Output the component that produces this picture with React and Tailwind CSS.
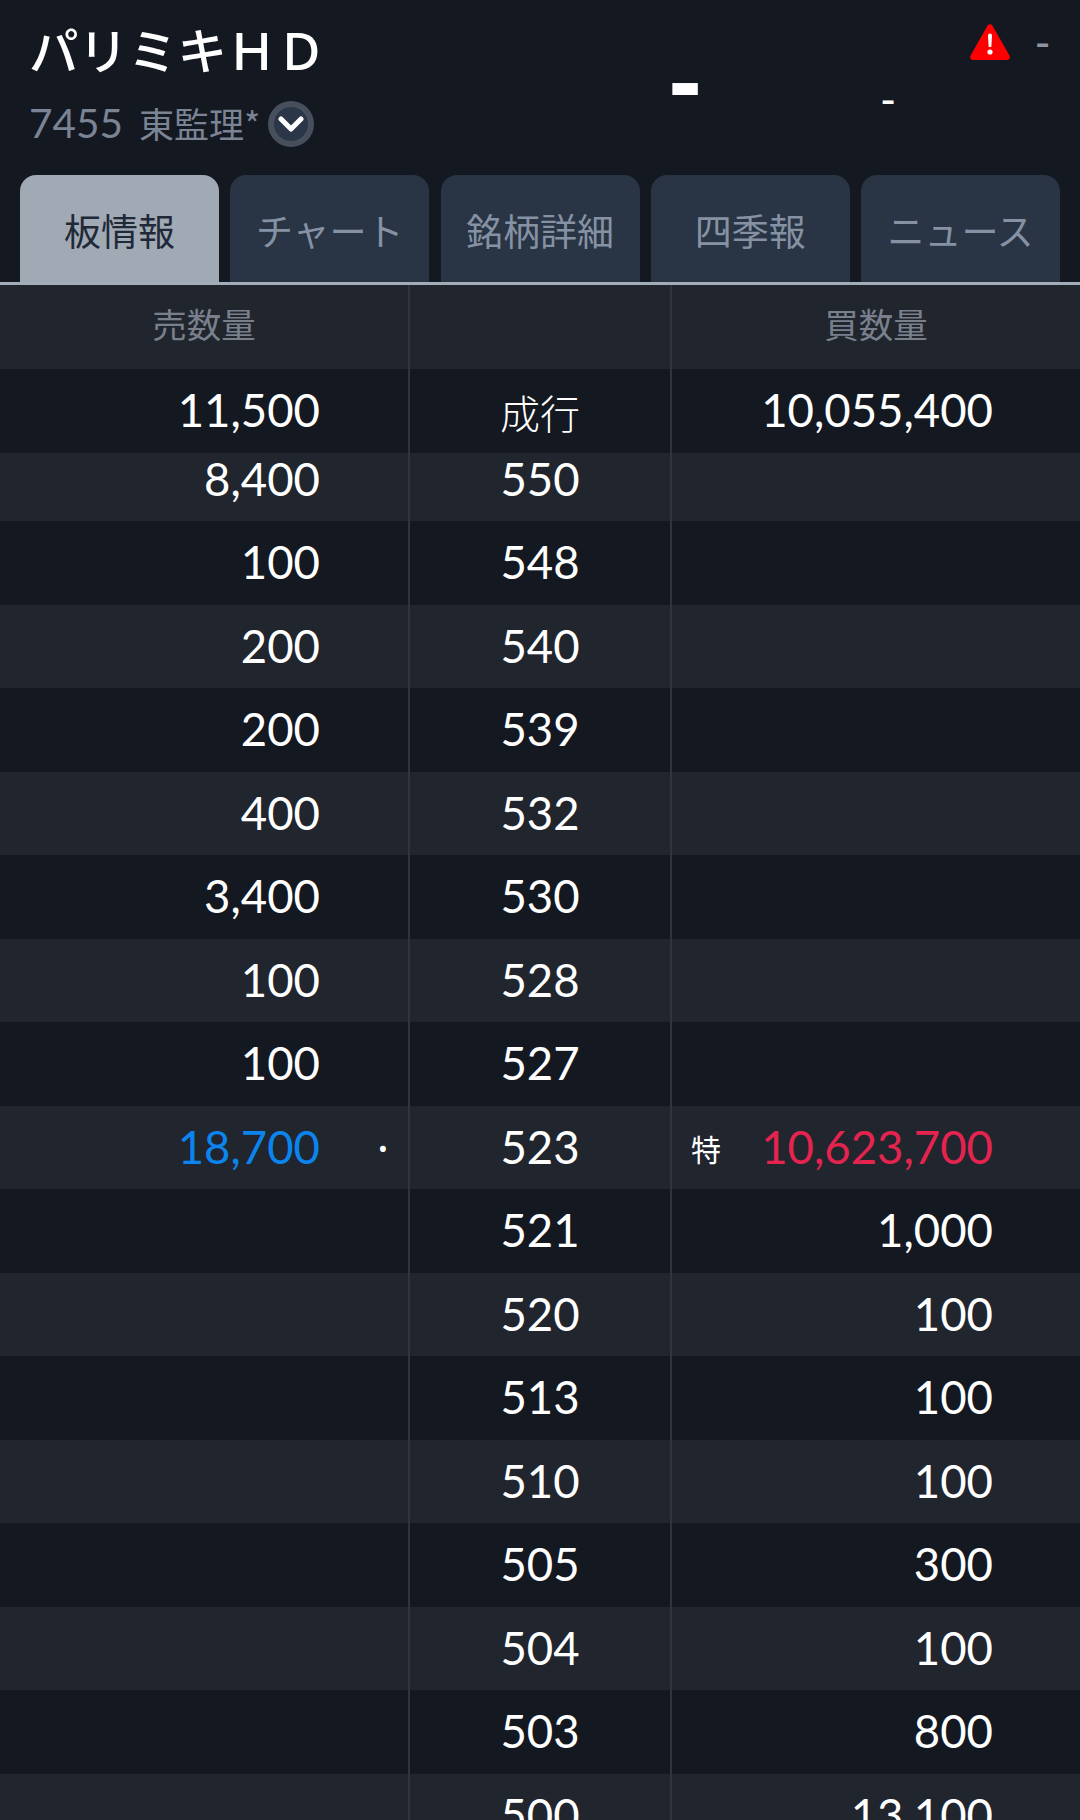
import React from "react";

const JP = "font-['Noto_Sans_CJK_JP','Noto_Sans',sans-serif]";
const NUM = "font-['Lato','Noto_Sans_CJK_JP',sans-serif] font-normal";

const tabs = ["板情報", "チャート", "銘柄詳細", "四季報", "ニュース"];

//--------------------------------- Board rows ------------------------------------
const rows = [
  { sell: "100", price: "548" },
  { sell: "200", price: "540" },
  { sell: "200", price: "539" },
  { sell: "400", price: "532" },
  { sell: "3,400", price: "530" },
  { sell: "100", price: "528" },
  { sell: "100", price: "527" },
  { sell: "18,700", price: "523", buy: "10,623,700", current: true },
  { price: "521", buy: "1,000" },
  { price: "520", buy: "100" },
  { price: "513", buy: "100" },
  { price: "510", buy: "100" },
  { price: "505", buy: "300" },
  { price: "504", buy: "100" },
  { price: "503", buy: "800" },
  { price: "500", buy: "13,100" },
];

const WarningIcon = () => (
  <svg width="40" height="36" viewBox="0 0 40 36">
    <path
      d="M17.6 1.6a2.8 2.8 0 0 1 4.8 0l17 29.8a3 3 0 0 1-2.5 4.6H3.1a3 3 0 0 1-2.5-4.6z"
      fill="#ff0000"
    />
    <path d="M18 11.5a2 2 0 0 1 4 0l-.7 11.5h-2.6z" fill="#ffffff" />
    <circle cx="20" cy="28" r="2.6" fill="#ffffff" />
  </svg>
);

const Row = ({ sell, price, buy, current, striped, clipped }) => (
  <div
    className={`overflow-hidden ${clipped ? "h-[68px]" : "h-[83.5px]"} ${
      striped ? "bg-[#20252e]" : "bg-[#141821]"
    }`}
  >
    {/* the first price row slides under the 成行 row */}
    <div
      className={`grid h-[83.5px] grid-cols-[408px_264px_1fr] ${
        clipped ? "-mt-[15.5px]" : ""
      }`}
    >
      <div className="flex items-center justify-end pb-[2px]">
        <span
          className={`${NUM} text-[45.5px] leading-none ${
            current ? "text-[#0b84ee]" : "text-white"
          }`}
        >
          {sell}
        </span>
        <span className="mt-[4px] w-[88px] pl-[58px] text-[26px] leading-none text-white">
          {current && "•"}
        </span>
      </div>
      <div
        className={`${NUM} flex items-center justify-center border-x-2 border-[#2f343d] pb-[2px] text-[45.5px] leading-none text-white`}
      >
        {price}
      </div>
      <div className="flex items-center justify-between pb-[2px] pl-[19px] pr-[87px]">
        <span className={`${JP} mt-[4px] text-[30px] leading-none text-white`}>
          {current && "特"}
        </span>
        <span
          className={`${NUM} text-[45.5px] leading-none ${
            current ? "text-[#e4244f]" : "text-white"
          }`}
        >
          {buy}
        </span>
      </div>
    </div>
  </div>
);

export default function App() {
  return (
    <div className="h-[1820px] w-[1080px] overflow-hidden bg-[#141821]">
      {/*--------------------------------- Header ---------------------------------*/}
      <div className="flex h-[175px] justify-between pl-[29px]">
        <div className="pt-[21px]">
          <div className={`${JP} text-[49.5px] font-medium leading-[56px] text-white`}>
            パリミキＨＤ
          </div>
          <div className="mt-[22px] flex items-center">
            <span className={`${NUM} text-[40.5px] leading-[46px] text-[#7b8494]`}>
              7455
            </span>
            <span
              className={`${JP} ml-[16px] text-[35px] leading-[46px] text-[#7b8494]`}
            >
              東監理*
            </span>
            <span className="ml-[8px] mt-[2px] flex h-[46px] w-[46px] items-center justify-center rounded-full border-[6px] border-[#474f5c] bg-[#2b3648]">
              <svg width="26" height="16" viewBox="0 0 26 16">
                <path
                  d="M3 3l10 10L23 3"
                  fill="none"
                  stroke="#ffffff"
                  strokeWidth="5"
                  strokeLinecap="round"
                  strokeLinejoin="round"
                />
              </svg>
            </span>
          </div>
        </div>
        <div className="flex pr-[30px]">
          <span className="mr-[179px] mt-[29.5px] font-['Liberation_Sans',sans-serif] text-[100px] font-bold leading-none text-white">
            -
          </span>
          <span className="mr-[75px] mt-[76.5px] font-['Liberation_Sans',sans-serif] text-[44px] leading-none text-white">
            -
          </span>
          <span className="mr-[25px] mt-[24px]">
            <WarningIcon />
          </span>
          <span className="mt-[20px] font-['Liberation_Sans',sans-serif] text-[44px] leading-none text-[#8c95a4]">
            -
          </span>
        </div>
      </div>

      {/*--------------------------------- Tabs -----------------------------------*/}
      <div className="grid h-[107px] grid-cols-[repeat(5,199px)] gap-x-[11.25px] pl-[20px]">
        {tabs.map((tab, i) => (
          <div
            key={tab}
            className={`${JP} flex items-center justify-center rounded-t-[16px] pt-[4px] text-[37px] leading-none ${
              i === 0
                ? "bg-[#a1a9b5] text-[#1f2937]"
                : "bg-[#293445] text-[#8592a3]"
            }`}
          >
            {tab}
          </div>
        ))}
      </div>
      <div className="h-[3px] bg-[#a3adba]" />

      {/*--------------------------------- Board ----------------------------------*/}
      <div className="grid h-[84px] grid-cols-[408px_264px_1fr] bg-[#20252e]">
        <div
          className={`${JP} flex items-center justify-center pb-[8px] text-[34.5px] leading-none text-[#79808c]`}
        >
          売数量
        </div>
        <div className="border-x-2 border-[#2f343d]" />
        <div
          className={`${JP} flex items-center justify-center pb-[8px] text-[34.5px] leading-none text-[#79808c]`}
        >
          買数量
        </div>
      </div>
      <div className="grid h-[84px] grid-cols-[408px_264px_1fr] bg-[#141821]">
        <div className="flex items-center justify-end pb-[2px] pr-[88px]">
          <span className={`${NUM} text-[45.5px] leading-none text-white`}>
            11,500
          </span>
        </div>
        <div
          className={`${JP} flex items-center justify-center border-x-2 border-[#2f343d] pt-[2px] text-[40px] font-light leading-none text-white`}
        >
          成行
        </div>
        <div className="flex items-center justify-end pb-[2px] pr-[87px]">
          <span className={`${NUM} text-[45.5px] leading-none text-white`}>
            10,055,400
          </span>
        </div>
      </div>
      <Row sell="8,400" price="550" striped clipped />
      {rows.map((row, i) => (
        <Row key={row.price} {...row} striped={i % 2 === 1} />
      ))}
    </div>
  );
}
